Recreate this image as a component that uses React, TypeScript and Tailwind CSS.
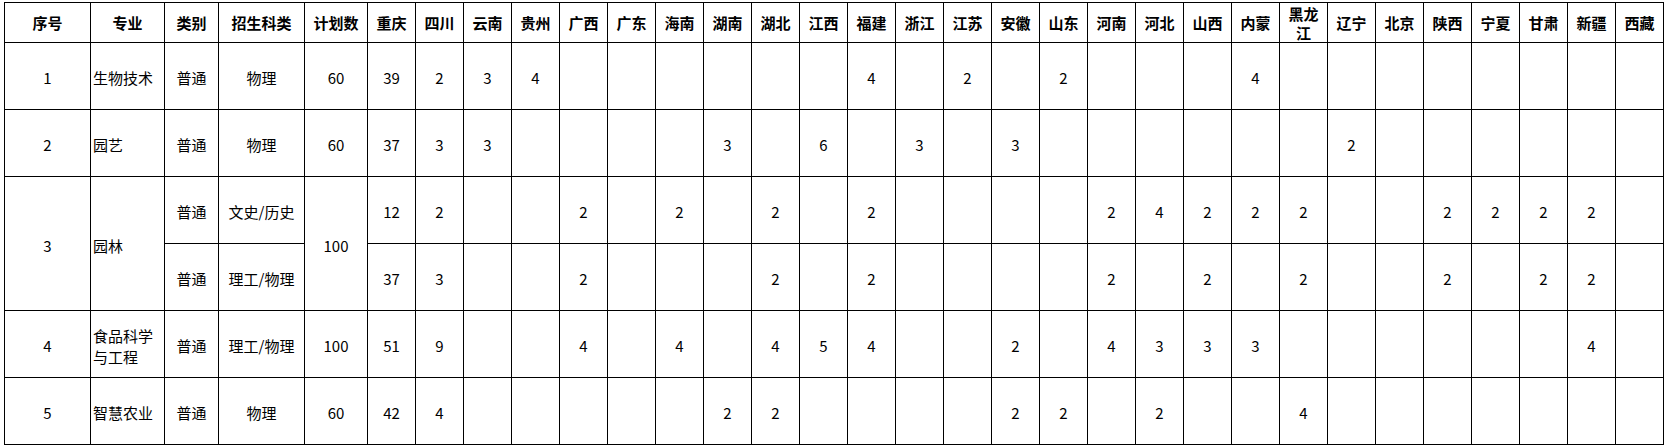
import React from "react";

const provinces = [
  "重庆", "四川", "云南", "贵州", "广西", "广东", "海南", "湖南", "湖北", "江西",
  "福建", "浙江", "江苏", "安徽", "山东", "河南", "河北", "山西", "内蒙", "黑龙江",
  "辽宁", "北京", "陕西", "宁夏", "甘肃", "新疆", "西藏",
];

type Vals = Record<string, string>;

const r1: Vals = { 重庆: "39", 四川: "2", 云南: "3", 贵州: "4", 福建: "4", 江苏: "2", 山东: "2", 内蒙: "4" };
const r2: Vals = { 重庆: "37", 四川: "3", 云南: "3", 湖南: "3", 江西: "6", 浙江: "3", 安徽: "3", 辽宁: "2" };
const r3a: Vals = {
  重庆: "12", 四川: "2", 广西: "2", 海南: "2", 湖北: "2", 福建: "2", 河南: "2", 河北: "4", 山西: "2",
  内蒙: "2", 黑龙江: "2", 陕西: "2", 宁夏: "2", 甘肃: "2", 新疆: "2",
};
const r3b: Vals = {
  重庆: "37", 四川: "3", 广西: "2", 湖北: "2", 福建: "2", 河南: "2", 山西: "2", 黑龙江: "2", 陕西: "2",
  甘肃: "2", 新疆: "2",
};
const r4: Vals = {
  重庆: "51", 四川: "9", 广西: "4", 海南: "4", 湖北: "4", 江西: "5", 福建: "4", 安徽: "2", 河南: "4",
  河北: "3", 山西: "3", 内蒙: "3", 新疆: "4",
};
const r5: Vals = { 重庆: "42", 四川: "4", 湖南: "2", 湖北: "2", 安徽: "2", 山东: "2", 河北: "2", 黑龙江: "4" };

const C = "bg-white flex items-center justify-center text-center text-[15px] leading-[21px] pt-[3px]";
const L = "bg-white flex items-center justify-start text-left text-[15px] leading-[21px] pl-[2px] pt-[3px]";
const H = "bg-white flex items-center justify-center text-center text-[15px] leading-[19px] font-bold";

function ProvCells({ v }: { v: Vals }) {
  return (
    <>
      {provinces.map((p) => (
        <div key={p} className={C}>
          {v[p] ?? ""}
        </div>
      ))}
    </>
  );
}

export default function App() {
  return (
    <div
      className="w-[1668px] h-[447px] bg-white text-black"
      style={{ fontFamily: '"Noto Sans CJK SC", "Noto Sans", sans-serif' }}
    >
      <div className="pt-[2px] pl-[4px]">
        <div className="inline-grid bg-black p-px gap-px grid-cols-[85px_73px_53px_85px_62px_repeat(27,47px)] grid-rows-[39px_repeat(6,66px)]">
          {/* header */}
          <div className={H}>序号</div>
          <div className={H}>专业</div>
          <div className={H}>类别</div>
          <div className={H}>招生科类</div>
          <div className={H}>计划数</div>
          {provinces.map((p) => (
            <div key={p} className={H}>
              {p === "黑龙江" ? (
                <span>
                  黑龙
                  <br />江
                </span>
              ) : (
                p
              )}
            </div>
          ))}

          {/* row 1 */}
          <div className={C}>1</div>
          <div className={L}>生物技术</div>
          <div className={C}>普通</div>
          <div className={C}>物理</div>
          <div className={C}>60</div>
          <ProvCells v={r1} />

          {/* row 2 */}
          <div className={C}>2</div>
          <div className={L}>园艺</div>
          <div className={C}>普通</div>
          <div className={C}>物理</div>
          <div className={C}>60</div>
          <ProvCells v={r2} />

          {/* row 3 */}
          <div className={`${C} row-span-2`}>3</div>
          <div className={`${L} row-span-2`}>园林</div>
          <div className={C}>普通</div>
          <div className={C}>文史/历史</div>
          <div className={`${C} row-span-2`}>100</div>
          <ProvCells v={r3a} />
          <div className={C}>普通</div>
          <div className={C}>理工/物理</div>
          <ProvCells v={r3b} />

          {/* row 4 */}
          <div className={C}>4</div>
          <div className={L}>
            <span>
              食品科学
              <br />与工程
            </span>
          </div>
          <div className={C}>普通</div>
          <div className={C}>理工/物理</div>
          <div className={C}>100</div>
          <ProvCells v={r4} />

          {/* row 5 */}
          <div className={C}>5</div>
          <div className={L}>智慧农业</div>
          <div className={C}>普通</div>
          <div className={C}>物理</div>
          <div className={C}>60</div>
          <ProvCells v={r5} />
        </div>
      </div>
    </div>
  );
}
